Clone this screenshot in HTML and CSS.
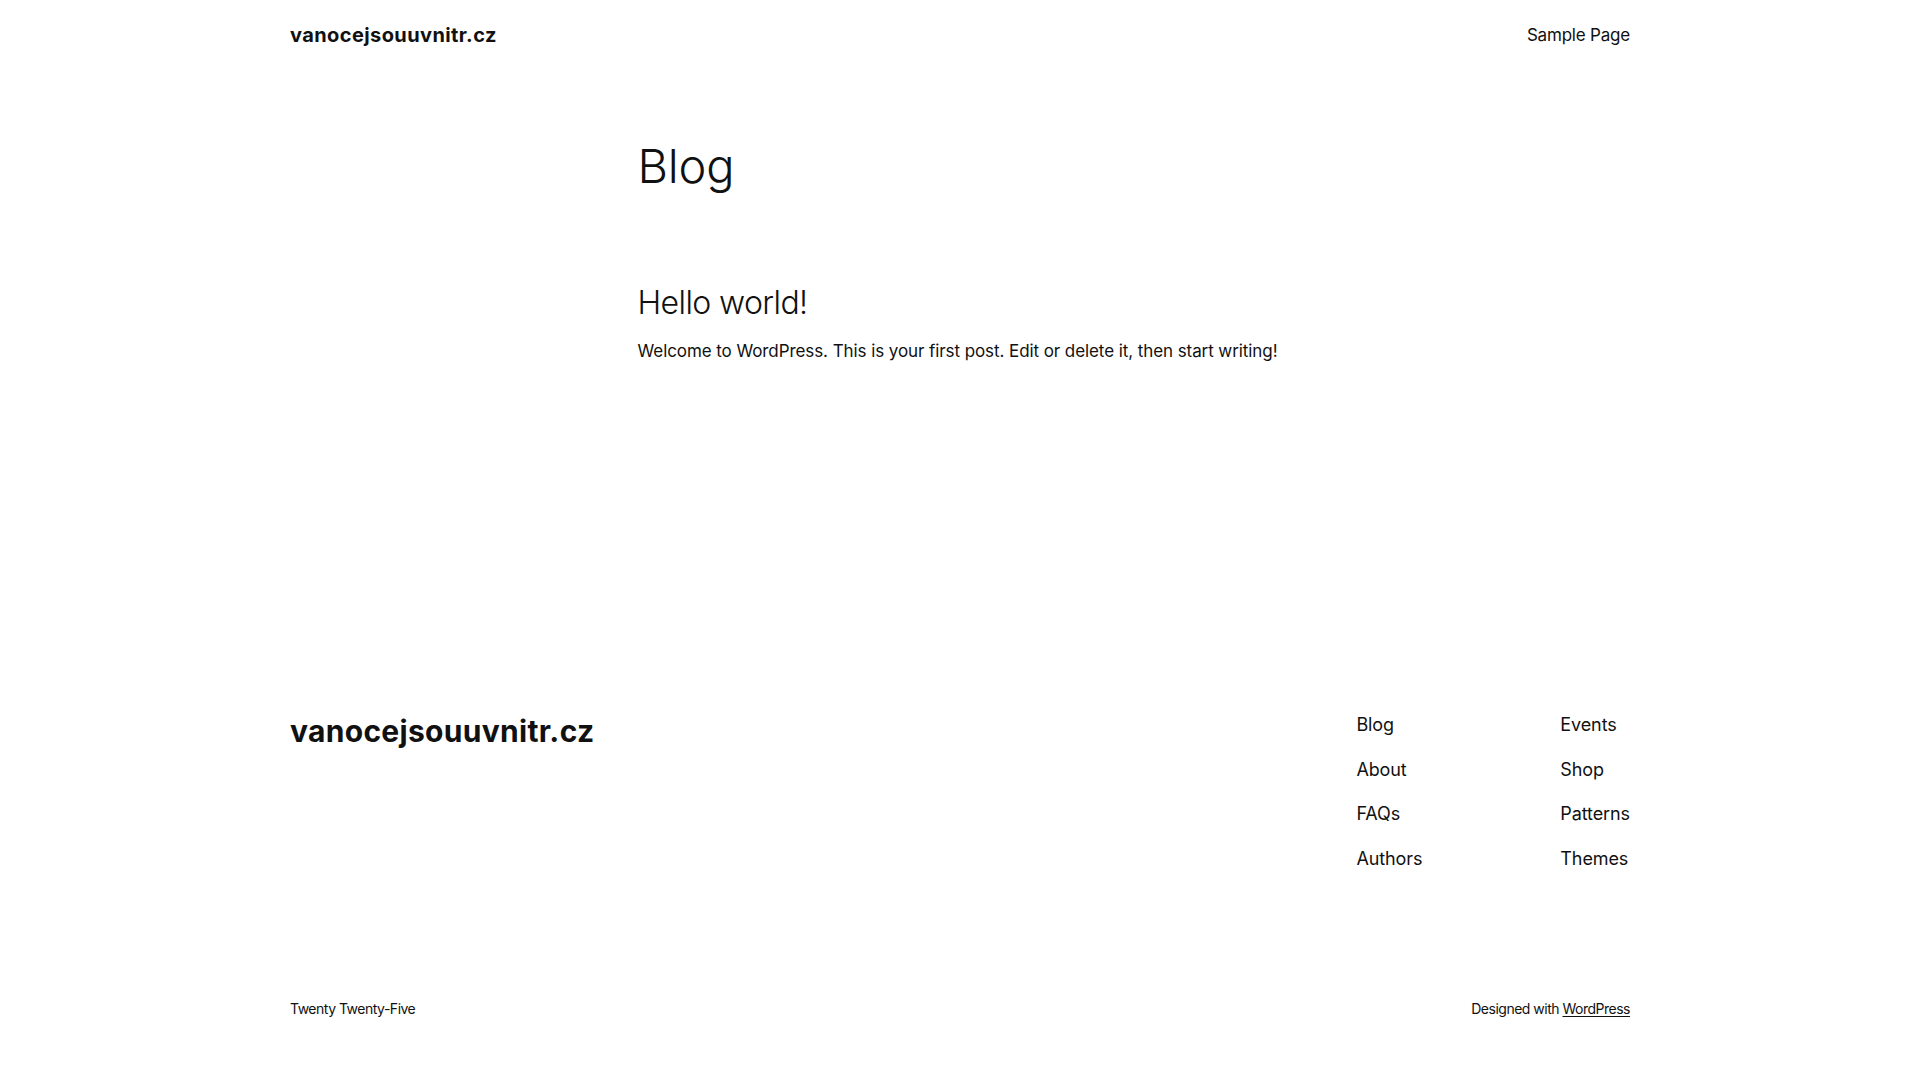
FILE: index.html
```html
<!DOCTYPE html>
<html lang="en">
<head>
<meta charset="utf-8">
<title>vanocejsouuvnitr.cz</title>
<link rel="stylesheet" href="styles.css">
</head>
<body>
<header class="site-header">
  <a class="site-title" href="#">vanocejsouuvnitr.cz</a>
  <nav class="header-nav"><a href="#">Sample Page</a></nav>
</header>
<main class="content">
  <h1 class="page-title">Blog</h1>
  <article class="post">
    <h2 class="post-title">Hello world!</h2>
    <p class="post-excerpt">Welcome to WordPress. This is your first post. Edit or delete it, then start writing!</p>
  </article>
</main>
<footer class="site-footer">
  <div class="footer-top">
    <a class="footer-title" href="#">vanocejsouuvnitr.cz</a>
    <div class="footer-navs">
      <ul class="footer-nav">
        <li><a href="#">Blog</a></li>
        <li><a href="#">About</a></li>
        <li><a href="#">FAQs</a></li>
        <li><a href="#">Authors</a></li>
      </ul>
      <ul class="footer-nav">
        <li><a href="#">Events</a></li>
        <li><a href="#">Shop</a></li>
        <li><a href="#">Patterns</a></li>
        <li><a href="#">Themes</a></li>
      </ul>
    </div>
  </div>
  <div class="footer-bottom">
    <span>Twenty Twenty-Five</span>
    <span>Designed with <a class="underlined" href="#">WordPress</a></span>
  </div>
</footer>
</body>
</html>
```
FILE: styles.css
```css
html, body {
  margin: 0;
  padding: 0;
  background: #ffffff;
}
body {
  font-family: Inter, "Noto Sans", "DejaVu Sans", sans-serif;
  color: #111111;
  font-size: 18px;
  -webkit-font-smoothing: antialiased;
}
a {
  color: inherit;
  text-decoration: none;
}
.site-header {
  width: 1340px;
  height: 70px;
  margin: 0 auto;
  display: flex;
  justify-content: space-between;
  align-items: center;
}
.site-title {
  font-size: 20px;
  font-weight: 700;
  letter-spacing: 0.4px;
  line-height: 28px;
}
.header-nav a {
  font-size: 17px;
  line-height: 26px;
  letter-spacing: -0.2px;
}
.content {
  width: 645px;
  margin: 0 auto;
  padding-top: 67px;
}
.page-title {
  margin: 0;
  font-size: 47px;
  font-weight: 300;
  line-height: 58px;
  letter-spacing: -0.2px;
}
.post {
  margin-top: 89px;
}
.post-title {
  margin: 0;
  font-size: 32px;
  font-weight: 300;
  line-height: 38px;
  letter-spacing: -0.6px;
}
.post-excerpt {
  margin: 16px 0 0;
  font-size: 17px;
  line-height: 26px;
  letter-spacing: -0.08px;
  white-space: nowrap;
}
.site-footer {
  width: 1340px;
  margin: 0 auto;
  padding-top: 347px;
}
.footer-top {
  display: flex;
  justify-content: space-between;
  align-items: flex-start;
}
.footer-title {
  font-size: 30px;
  font-weight: 700;
  line-height: 40px;
  letter-spacing: 0.3px;
}
.footer-navs {
  display: flex;
  gap: 138px;
  margin-top: 1px;
}
.footer-nav {
  list-style: none;
  margin: 0;
  padding: 0;
  display: flex;
  flex-direction: column;
  gap: 18.5px;
}
.footer-nav li {
  font-size: 18px;
  line-height: 26px;
  letter-spacing: -0.1px;
}
.footer-bottom {
  margin-top: 125px;
  display: flex;
  justify-content: space-between;
  font-size: 14px;
  line-height: 24px;
  letter-spacing: -0.5px;
}
.underlined {
  text-decoration: underline;
  text-decoration-thickness: 1px;
  text-underline-offset: 2px;
}
```
